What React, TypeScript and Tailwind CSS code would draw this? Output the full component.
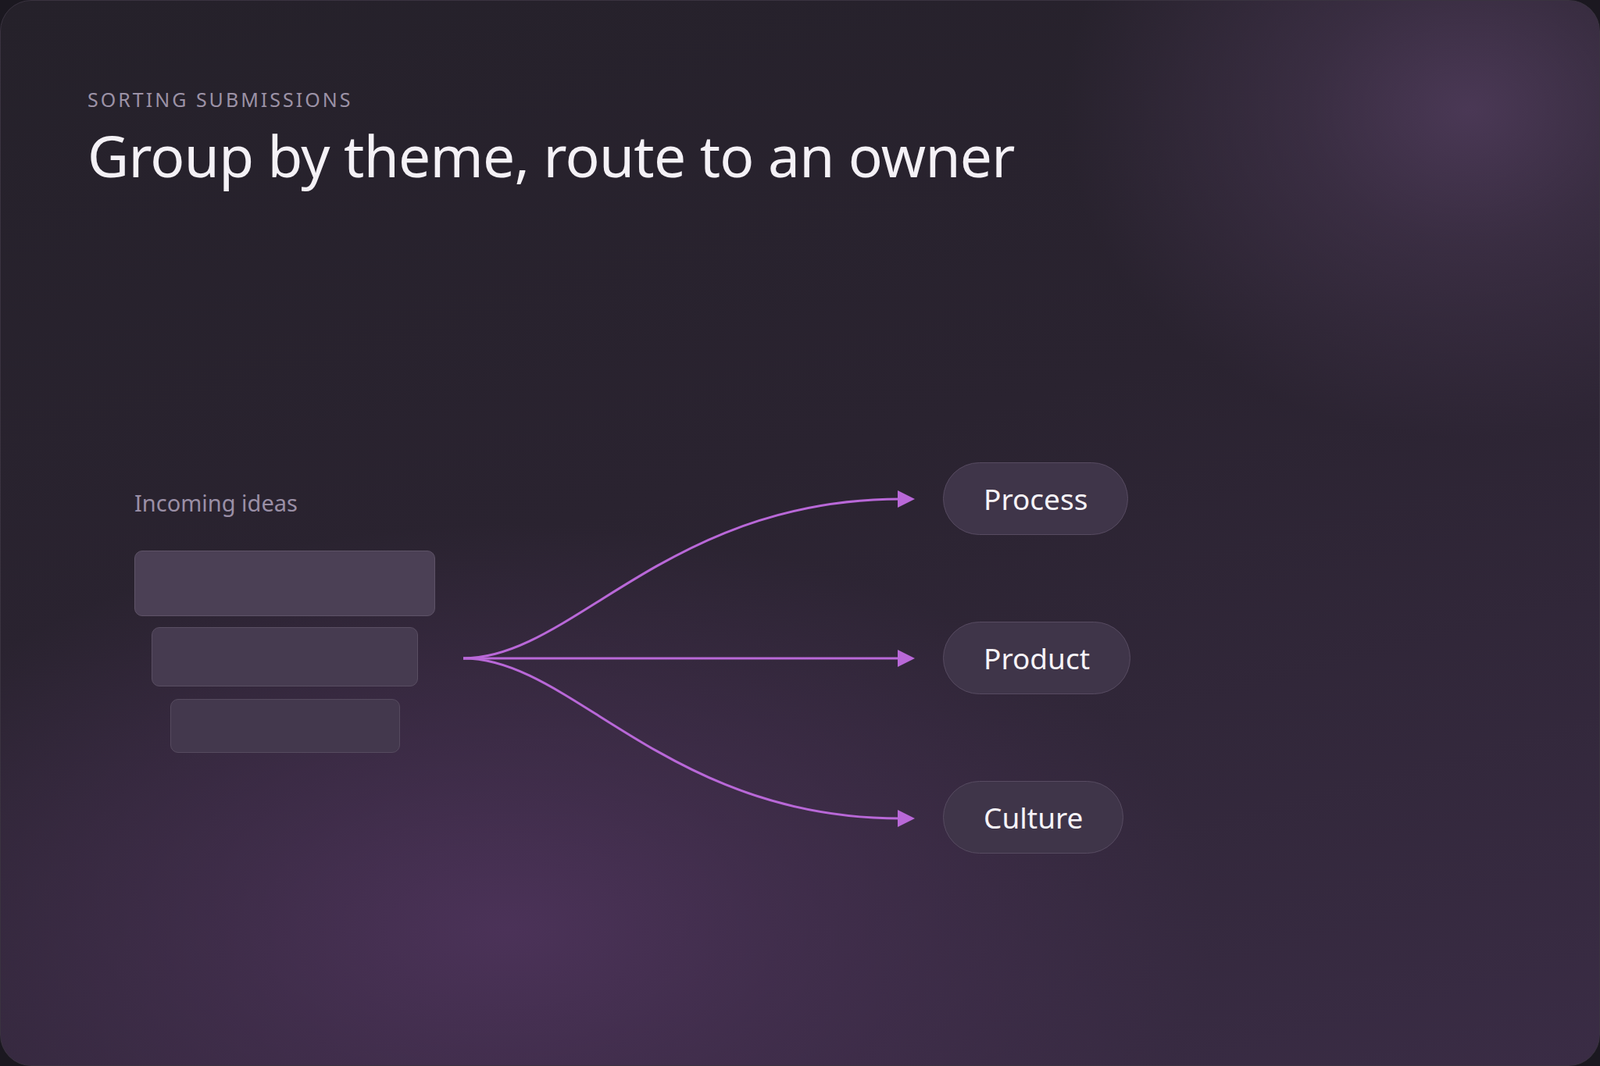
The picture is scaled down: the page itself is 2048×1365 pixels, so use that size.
export default function App() {
  const pills = ["Process", "Product", "Culture"]
  return (
    <div className="w-[2048px] h-[1365px] bg-[#1b1820] font-['Liberation_Sans']">
      <div className="relative w-full h-full overflow-hidden rounded-[40px] border border-[#3a3340] bg-[radial-gradient(ellipse_900px_520px_at_650px_1190px,#4b3258_0%,rgba(75,50,88,0.55)_40%,rgba(0,0,0,0)_100%),radial-gradient(ellipse_520px_420px_at_1880px_140px,#4a3855_0%,rgba(74,56,85,0.5)_40%,rgba(0,0,0,0)_100%),linear-gradient(165deg,#25212a_0%,#2a2330_45%,#3a2c45_100%)]">
        <div className="pl-[111px] pt-[114px]">
          <div className="text-[25px] tracking-[0.12em] text-[#9c92a6] leading-none">SORTING SUBMISSIONS</div>
          <h1 className="mt-[22px] text-[73px] leading-none tracking-[-0.01em] text-[#f4f1f6]">
            Group by theme, route to an owner
          </h1>
        </div>

        <div className="flex items-start pl-[171px] mt-[357px]">
          <div className="flex flex-col items-center w-[385px] mt-[34px]">
            <div className="self-start text-[29px] leading-[36px] text-[#9a8fa6]">Incoming ideas</div>
            <div className="mt-[43px] w-[385px] h-[84px] rounded-[10px] bg-[#4b4055] border border-[#5e5367]" />
            <div className="mt-[14px] w-[341px] h-[76px] rounded-[10px] bg-[#463b50] border border-[#594e62]" />
            <div className="mt-[16px] w-[294px] h-[69px] rounded-[10px] bg-[#43384d] border border-[#564b5f]" />
          </div>

          <svg className="ml-[36px]" width="614" height="503" viewBox="0 0 614 503" fill="none">
            <path d="M0 251 C 140 251 260 47 560 47" stroke="#b968d8" strokeWidth="3" />
            <path d="M0 251 L 560 251" stroke="#b968d8" strokeWidth="3" />
            <path d="M0 251 C 140 251 260 456 560 456" stroke="#b968d8" strokeWidth="3" />
            <path d="M556 36 L 578 47 L 556 58 Z" fill="#b968d8" />
            <path d="M556 240 L 578 251 L 556 262 Z" fill="#b968d8" />
            <path d="M556 445 L 578 456 L 556 467 Z" fill="#b968d8" />
          </svg>

          <div className="flex flex-col items-start gap-[111px]">
            {pills.map((p) => (
              <div
                key={p}
                className="h-[93px] px-[51px] flex items-center rounded-full bg-[#3f3549] border border-[#574b61] text-[37px] text-[#f6f3f8]"
              >
                {p}
              </div>
            ))}
          </div>
        </div>
      </div>
    </div>
  )
}
